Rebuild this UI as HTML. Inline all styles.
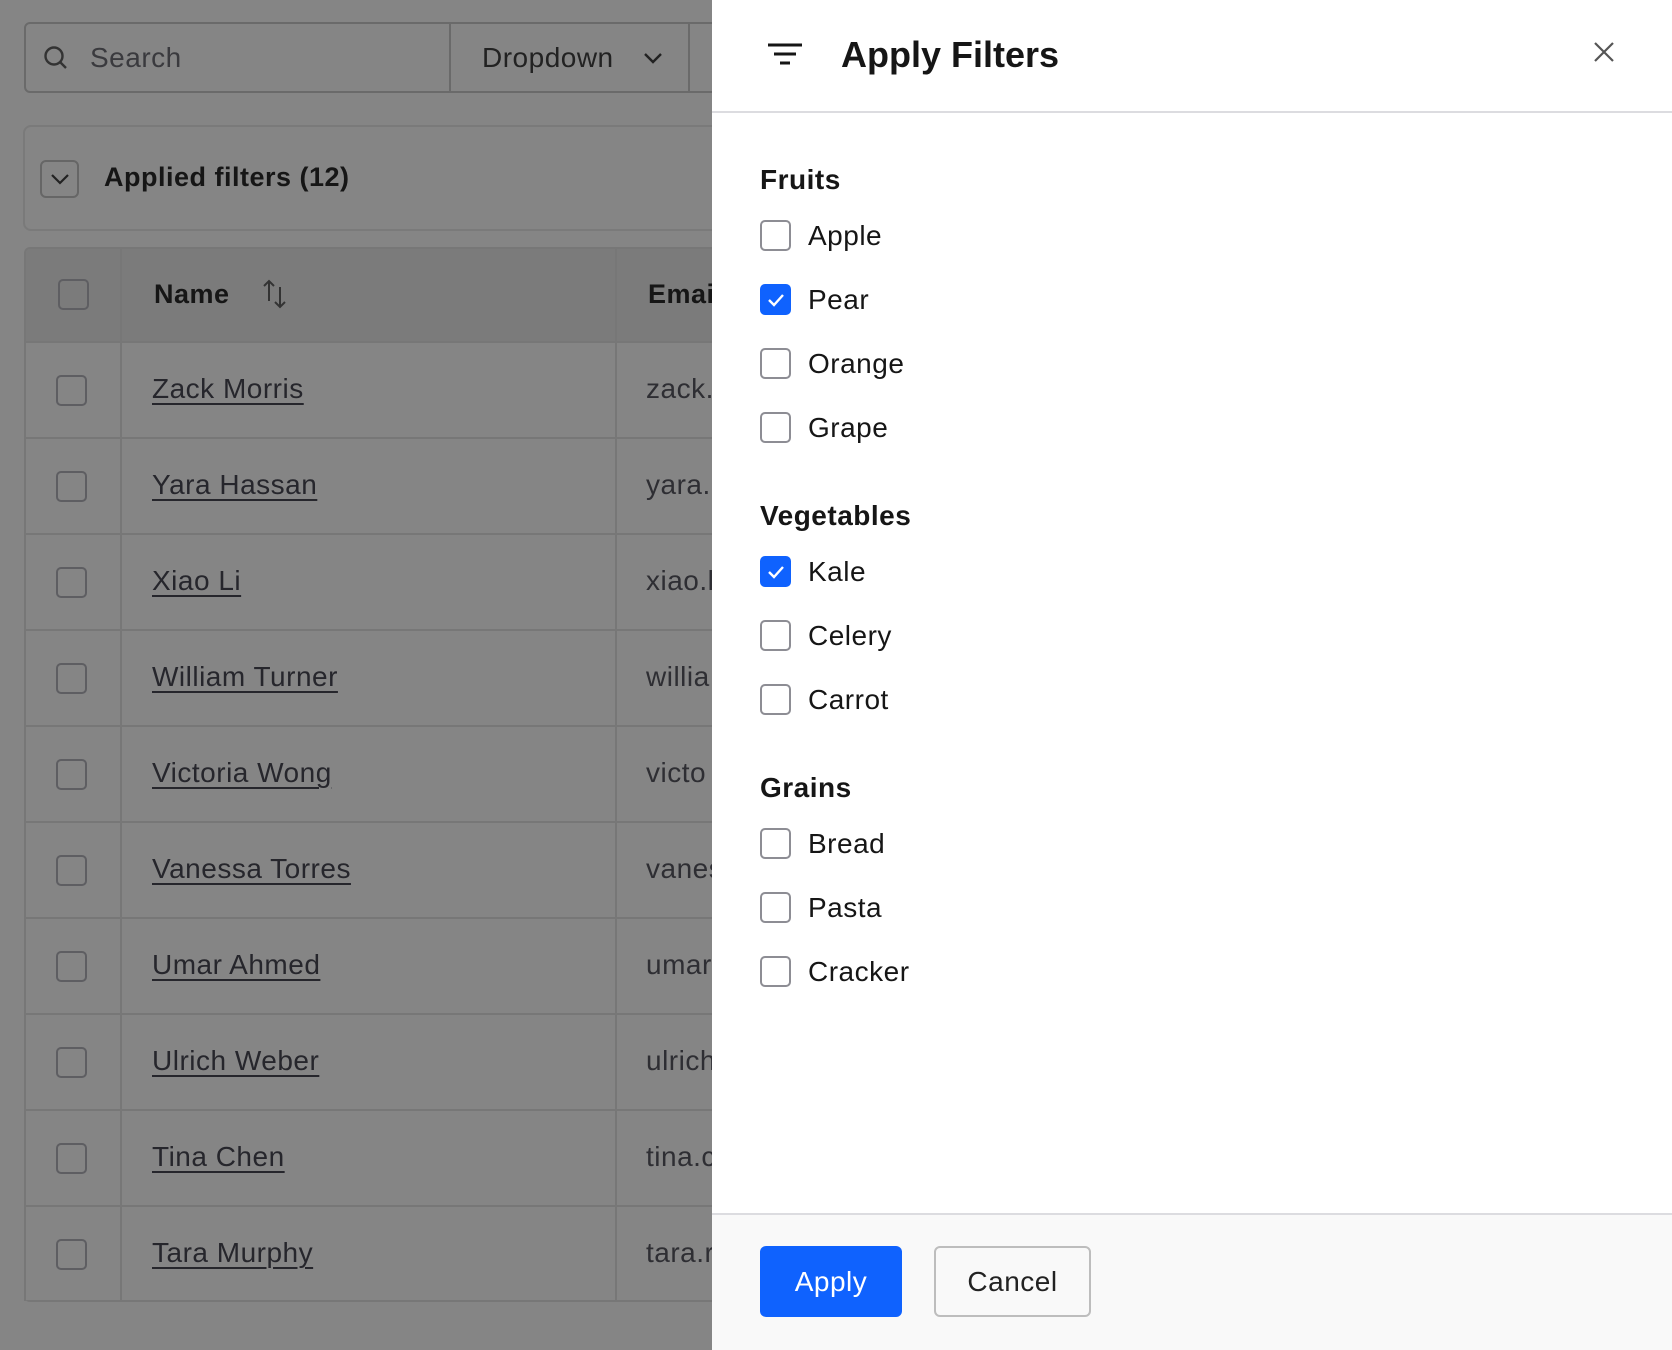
<!DOCTYPE html>
<html><head><meta charset="utf-8"><style>
*{box-sizing:border-box;margin:0;padding:0}
body{width:1672px;height:1350px;overflow:hidden;background:#858585;font-family:"Liberation Sans",sans-serif;position:relative;color:#1e1e22;letter-spacing:0.5px}
.abs{position:absolute}
.search{left:24px;top:22px;width:720px;height:71px;border:2px solid #6a6a6a;border-radius:6px;background:#858585}
.cb{position:absolute;width:31px;height:31px;border:2px solid #5e5e62;border-radius:5px}
.row{position:absolute;left:24px;width:700px;height:96px;border-top:2px solid #777;background:#858585}
.row .cb{left:32px;top:32px}
.row .nm{position:absolute;left:128px;top:30px;font-size:28px;color:#26262c;text-decoration:underline;text-underline-offset:5px;text-decoration-thickness:2px}
.row .em{position:absolute;left:622px;top:30px;font-size:28px;color:#2e2e33}
.panel{left:712px;top:0;width:960px;height:1350px;background:#fff}
.lbl{position:absolute;left:48px;font-size:28px;font-weight:bold;color:#161616}
.it{position:absolute;left:48px;height:32px}
.it .cb{left:0;top:0;border-color:#8d8d94;border-width:2px;background:#fff}
.it .cb.on{background:#0f62fe;border-color:#0f62fe}
.it span{position:absolute;left:48px;top:0;font-size:28px;line-height:32px;color:#161616;white-space:nowrap}
</style></head><body>
<div class="abs search">
 <svg class="abs" style="left:16px;top:20px" width="28" height="28" viewBox="0 0 28 28"><circle cx="12" cy="12" r="8.5" fill="none" stroke="#333" stroke-width="2.4"/><line x1="18" y1="18" x2="24" y2="24" stroke="#333" stroke-width="2.4"/></svg>
 <div class="abs" style="left:64px;top:18px;font-size:28px;color:#3a3a3e">Search</div>
 <div class="abs" style="left:423px;top:-2px;width:2px;height:71px;background:#6a6a6a"></div>
 <div class="abs" style="left:456px;top:18px;font-size:28px;color:#222">Dropdown</div>
 <svg class="abs" style="left:616px;top:24px" width="22" height="20" viewBox="0 0 22 20"><path d="M3 6 L11 14 L19 6" fill="none" stroke="#222" stroke-width="2.4"/></svg>
 <div class="abs" style="left:662px;top:-2px;width:2px;height:71px;background:#6a6a6a"></div>
</div>
<div class="abs" style="left:23px;top:125px;width:720px;height:106px;border:2px solid #7a7a7a;border-radius:8px"></div>
<div class="abs" style="left:40px;top:160px;width:39px;height:38px;border:2px solid #666;border-radius:6px"><svg style="position:absolute;left:7px;top:8px" width="22" height="18" viewBox="0 0 22 18"><path d="M3 5 L11 13 L19 5" fill="none" stroke="#222" stroke-width="2.2"/></svg></div>
<div class="abs" style="left:104px;top:162px;font-size:27px;font-weight:bold;color:#161616">Applied filters (12)</div>
<div class="abs" style="left:24px;top:247px;width:700px;height:1055px;border:2px solid #777;border-radius:6px;background:#858585;overflow:hidden">
 <div class="abs" style="left:0;top:0;width:700px;height:94px;background:#7b7b7b"></div>
 <div class="cb" style="left:32px;top:30px"></div>
 <div class="abs" style="left:128px;top:30px;font-size:27px;font-weight:bold;color:#161616">Name</div>
 <svg class="abs" style="left:234px;top:28px" width="30" height="34" viewBox="0 0 30 34"><path d="M9 24 V4 M4 9 L9 4 L14 9 M20 10 V30 M15 25 L20 30 L25 25" fill="none" stroke="#333" stroke-width="2"/></svg>
 <div class="abs" style="left:622px;top:30px;font-size:27px;font-weight:bold;color:#161616">Email</div>
 <div class="abs" style="left:94px;top:0;width:2px;height:1060px;background:#777;z-index:2"></div>
 <div class="abs" style="left:589px;top:0;width:2px;height:1060px;background:#777;z-index:2"></div>
</div>
<div class="row" style="top:341px"><div class="cb"></div><div class="nm">Zack Morris</div><div class="em">zack.</div></div>
<div class="row" style="top:437px"><div class="cb"></div><div class="nm">Yara Hassan</div><div class="em">yara.</div></div>
<div class="row" style="top:533px"><div class="cb"></div><div class="nm">Xiao Li</div><div class="em">xiao.l</div></div>
<div class="row" style="top:629px"><div class="cb"></div><div class="nm">William Turner</div><div class="em">willia</div></div>
<div class="row" style="top:725px"><div class="cb"></div><div class="nm">Victoria Wong</div><div class="em">victo</div></div>
<div class="row" style="top:821px"><div class="cb"></div><div class="nm">Vanessa Torres</div><div class="em">vanes</div></div>
<div class="row" style="top:917px"><div class="cb"></div><div class="nm">Umar Ahmed</div><div class="em">umar</div></div>
<div class="row" style="top:1013px"><div class="cb"></div><div class="nm">Ulrich Weber</div><div class="em">ulrich</div></div>
<div class="row" style="top:1109px"><div class="cb"></div><div class="nm">Tina Chen</div><div class="em">tina.c</div></div>
<div class="row" style="top:1205px;height:95px"><div class="cb"></div><div class="nm">Tara Murphy</div><div class="em">tara.r</div></div>
<div class="abs" style="left:120px;top:341px;width:2px;height:960px;background:#777"></div>
<div class="abs" style="left:615px;top:341px;width:2px;height:960px;background:#777"></div>
<div class="abs" style="left:24px;top:341px;width:2px;height:960px;background:#777"></div>

<div class="abs panel">
 <svg class="abs" style="left:54px;top:42px" width="38" height="26" viewBox="0 0 38 26"><path d="M2 3 H36 M8 12 H30 M14 21 H24" stroke="#161616" stroke-width="3"/></svg>
 <div class="abs" style="left:129px;top:34px;font-size:36px;color:#161616;font-weight:bold;letter-spacing:0">Apply Filters</div>
 <svg class="abs" style="left:880px;top:40px" width="24" height="24" viewBox="0 0 24 24"><path d="M3 3 L21 21 M21 3 L3 21" stroke="#555" stroke-width="2.2"/></svg>
 <div class="abs" style="left:0;top:111px;width:960px;height:2px;background:#dcdce0"></div>
 <div class="lbl" style="top:164px">Fruits</div>
 <div class="it" style="top:220px"><div class="cb"></div><span>Apple</span></div>
 <div class="it" style="top:284px"><div class="cb on"><svg style="position:absolute;left:4px;top:5px" width="20" height="18" viewBox="0 0 20 18"><path d="M3 9 L8 14 L17 4" fill="none" stroke="#fff" stroke-width="2.4"/></svg></div><span>Pear</span></div>
 <div class="it" style="top:348px"><div class="cb"></div><span>Orange</span></div>
 <div class="it" style="top:412px"><div class="cb"></div><span>Grape</span></div>
 <div class="lbl" style="top:500px">Vegetables</div>
 <div class="it" style="top:556px"><div class="cb on"><svg style="position:absolute;left:4px;top:5px" width="20" height="18" viewBox="0 0 20 18"><path d="M3 9 L8 14 L17 4" fill="none" stroke="#fff" stroke-width="2.4"/></svg></div><span>Kale</span></div>
 <div class="it" style="top:620px"><div class="cb"></div><span>Celery</span></div>
 <div class="it" style="top:684px"><div class="cb"></div><span>Carrot</span></div>
 <div class="lbl" style="top:772px">Grains</div>
 <div class="it" style="top:828px"><div class="cb"></div><span>Bread</span></div>
 <div class="it" style="top:892px"><div class="cb"></div><span>Pasta</span></div>
 <div class="it" style="top:956px"><div class="cb"></div><span>Cracker</span></div>
 <div class="abs" style="left:0;top:1213px;width:960px;height:137px;background:#f9f9f9;border-top:2px solid #dcdce0"></div>
 <div class="abs" style="left:48px;top:1246px;width:142px;height:71px;background:#0f62fe;border-radius:6px;color:#fff;font-size:28px;text-align:center;line-height:71px">Apply</div>
 <div class="abs" style="left:222px;top:1246px;width:157px;height:71px;background:#f9f9f9;border:2px solid #bdbdbd;border-radius:6px;color:#222;font-size:28px;text-align:center;line-height:67px">Cancel</div>
</div>
</body></html>
